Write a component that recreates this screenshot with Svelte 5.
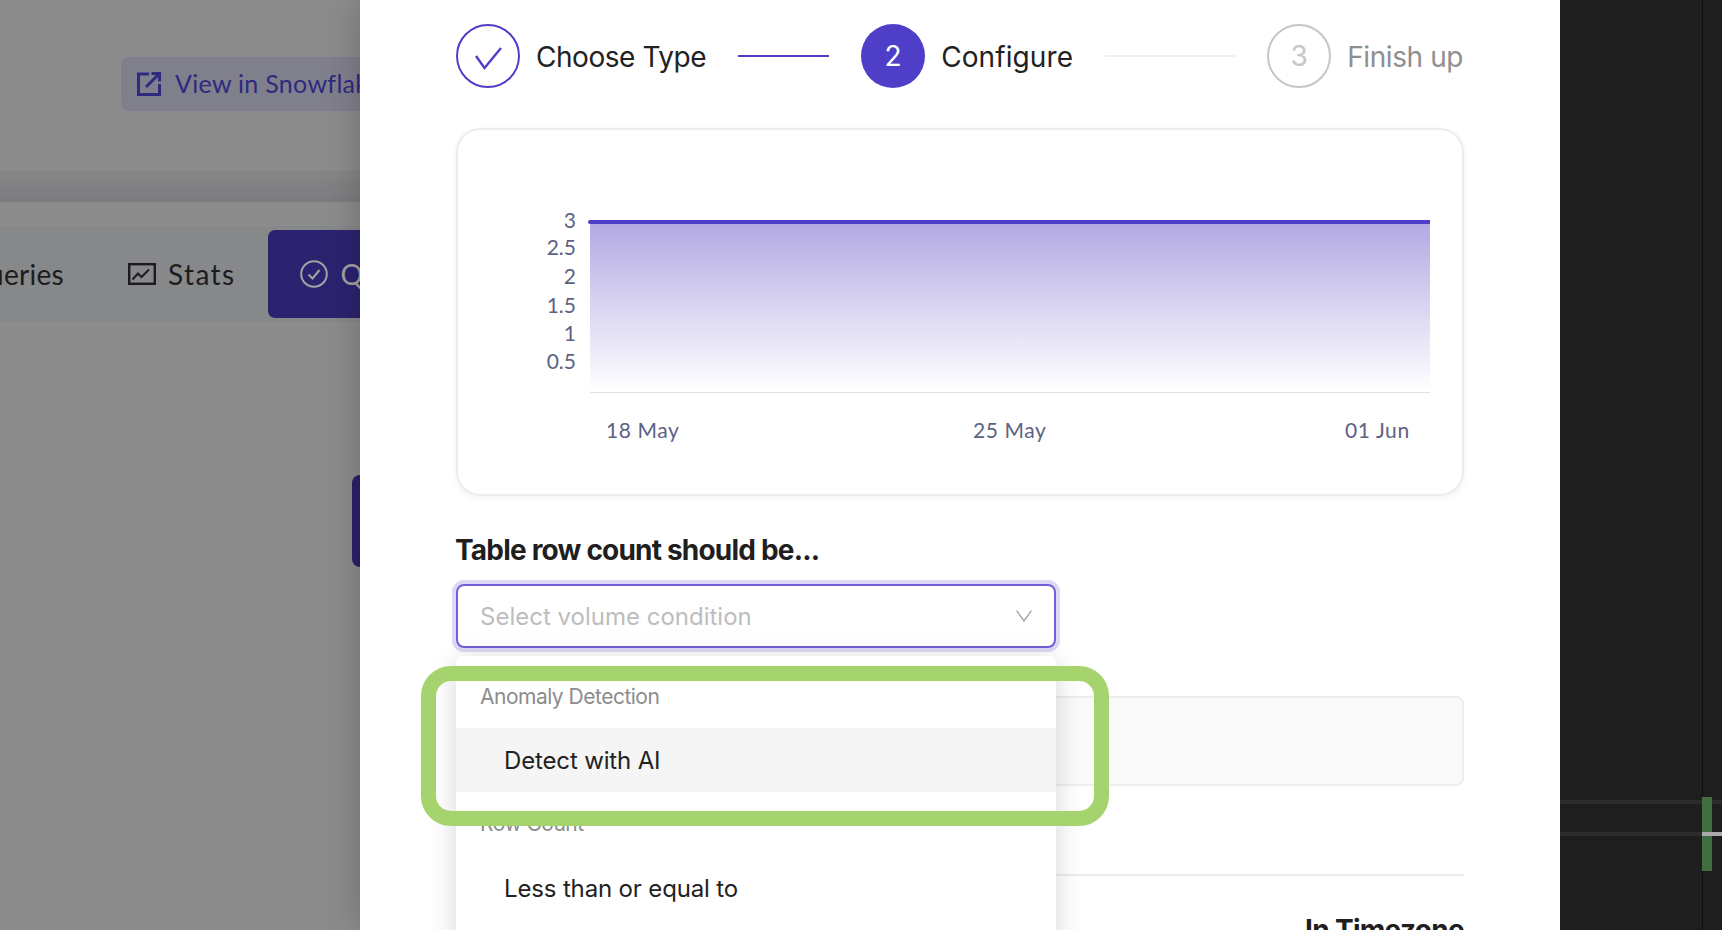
<script>
  const yTicks = [
    { label: '3', y: 220.5 },
    { label: '2.5', y: 248 },
    { label: '2', y: 276.5 },
    { label: '1.5', y: 306 },
    { label: '1', y: 334 },
    { label: '0.5', y: 362 }
  ];
  const xTicks = [
    { label: '18 May', x: 606 },
    { label: '25 May', x: 973 },
    { label: '01 Jun', x: 1345 }
  ];
</script>

<div class="screen">
  <aside class="backdrop">
    <div class="ext-btn">
      <svg class="ext-icon" viewBox="0 0 24 24" width="24" height="24" fill="none" stroke="#2e2a80" stroke-width="3">
        <path d="M12 2H1.5V22.5H22.5V12" />
        <path d="M9 15L22 2M14.5 1.5H22.5V9.5" />
      </svg>
      <span class="ext-text">View in Snowflake</span>
    </div>
    <div class="band"></div>
    <div class="tabs">
      <span class="tab-clip">Queries</span>
      <span class="tab">
        <svg viewBox="0 0 28 22" width="28" height="22" fill="none" stroke="#1c1c1e" stroke-width="2.4">
          <rect x="1.2" y="1.2" width="25.6" height="19.6" />
          <path d="M4.5 16.5L10 10.5L13.5 14L21 6.5" stroke-width="2" />
        </svg>
        Stats
      </span>
      <span class="tab active">
        <svg viewBox="0 0 28 28" width="28" height="28" fill="none" stroke="#a3a3a3" stroke-width="2">
          <circle cx="14" cy="14" r="12.8" />
          <path d="M8.5 14.5L12.5 18.5L19.5 10" />
        </svg>
        Quality
      </span>
    </div>
    <div class="stub"></div>
  </aside>

  <main class="modal">
    <div class="content">
      <nav class="stepper">
        <span class="circle done">
          <svg viewBox="0 0 60 60" width="60" height="60" fill="none" stroke="#4f3fc8" stroke-width="2.4">
            <path d="M18 30L26.5 42L43 22" />
          </svg>
        </span>
        <span class="step-label first">Choose Type</span>
        <span class="line line-a"></span>
        <span class="circle current">2</span>
        <span class="step-label mid">Configure</span>
        <span class="line line-b"></span>
        <span class="circle todo">3</span>
        <span class="step-label muted">Finish up</span>
      </nav>

      <section class="card">
        <svg class="chart" viewBox="456 128 1008 368" width="1008" height="368">
          <defs>
            <linearGradient id="area" x1="0" y1="0" x2="0" y2="1">
              <stop offset="0" stop-color="#b1a8e3" />
              <stop offset="0.5" stop-color="#d9d5f1" />
              <stop offset="1" stop-color="#ffffff" />
            </linearGradient>
          </defs>
          <rect x="590" y="222" width="840" height="170" fill="url(#area)" />
          <line x1="590" y1="392.5" x2="1430" y2="392.5" stroke="#e3e3e5" />
          <line x1="590" y1="222" x2="1430" y2="222" stroke="#4f3fc8" stroke-width="4" />
          <circle cx="590" cy="222" r="2" fill="#4f3fc8" />
          {#each yTicks as t}
            <text class="tick" x="576" y={t.y + 7} text-anchor="end">{t.label}</text>
          {/each}
          {#each xTicks as t}
            <text class="tick spaced" x={t.x} y="438">{t.label}</text>
          {/each}
        </svg>
      </section>

      <h2 class="heading">Table row count should be...</h2>

      <div class="select">
        <span>Select volume condition</span>
        <svg viewBox="0 0 16 12" width="16" height="12" fill="none" stroke="#a8a8a8" stroke-width="1.5">
          <path d="M0.6 0.6L8 11L15.4 0.6" />
        </svg>
      </div>

      <div class="field"></div>
      <div class="divider"></div>
      <div class="timezone">In Timezone</div>

      <div class="dropdown">
        <div class="group">Anomaly Detection</div>
        <div class="option hover">Detect with AI</div>
        <div class="group second">Row Count</div>
        <div class="option">Less than or equal to</div>
      </div>
    </div>
  </main>

  <div class="highlight"></div>

  <aside class="editor">
    <div class="rule"></div>
    <div class="rule second-rule"></div>
    <div class="gutter"></div>
    <div class="mark"></div>
    <div class="tickmark"></div>
  </aside>
</div>

<style>
  :global(body) {
    margin: 0;
    background: #1e1e1e;
  }

  .screen {
    position: relative;
    display: grid;
    grid-template-columns: 360px 1200px 162px;
    width: 1722px;
    height: 930px;
    overflow: hidden;
    font-family: Inter, "Liberation Sans", sans-serif;
  }

  .backdrop {
    overflow: hidden;
    background: #8c8c8c;
    font-family: Lato, "Liberation Sans", sans-serif;
  }

  .ext-btn {
    display: flex;
    align-items: center;
    gap: 14px;
    box-sizing: border-box;
    width: 300px;
    height: 54px;
    margin: 57px 0 0 121px;
    padding-left: 16px;
    border-radius: 8px;
    background: #807f8c;
    color: #2e2a80;
    font-size: 25px;
    letter-spacing: 0.3px;
    white-space: nowrap;
  }

  .ext-icon {
    flex: none;
  }

  .ext-text {
    padding-bottom: 2px;
  }

  .band {
    height: 32px;
    margin-top: 59px;
    background: linear-gradient(#878787, #7b7c80);
  }

  .tabs {
    display: flex;
    align-items: center;
    height: 96px;
    margin-top: 24px;
    background: #87888a;
    color: #1c1c1e;
    font-size: 28px;
    letter-spacing: 1.4px;
    white-space: nowrap;
  }

  .tab-clip {
    flex: none;
    width: 64px;
    direction: rtl;
    overflow: hidden;
    letter-spacing: 0.3px;
  }

  .tab {
    display: flex;
    flex: none;
    align-items: center;
    gap: 12px;
    margin-left: 64px;
  }

  .tab.active {
    gap: 13px;
    box-sizing: border-box;
    width: 200px;
    height: 88px;
    margin-left: 32px;
    padding-left: 32px;
    border-radius: 7px;
    background: #2c2370;
    color: #a3a3a3;
  }

  .stub {
    width: 40px;
    height: 92px;
    margin: 153px 0 0 352px;
    border-radius: 8px;
    background: #2a2268;
  }

  .modal {
    position: relative;
    z-index: 1;
    overflow: hidden;
    background: #fff;
    box-shadow: 0 0 36px rgba(0, 0, 0, 0.22);
  }

  .content {
    position: relative;
    width: 1008px;
    margin-left: 96px;
    padding-top: 24px;
  }

  .stepper {
    display: flex;
    align-items: center;
    height: 64px;
    color: #222;
    font-size: 28px;
  }

  .circle {
    display: flex;
    flex: none;
    align-items: center;
    justify-content: center;
    box-sizing: border-box;
    width: 64px;
    height: 64px;
    border-radius: 50%;
  }

  .done {
    border: 2px solid #4f3fc8;
  }

  .current {
    background: #4f3fc8;
    color: #fff;
  }

  .todo {
    border: 2px solid #c6c6c6;
    color: #c6c6c6;
  }

  .step-label {
    margin-left: 16px;
    padding-top: 2px;
    white-space: nowrap;
  }

  .first {
    letter-spacing: -0.45px;
  }

  .mid {
    letter-spacing: 0.1px;
  }

  .muted {
    color: #8f8f8f;
    letter-spacing: -0.4px;
  }

  .line {
    flex: none;
    height: 2px;
    margin: 0 32px;
  }

  .line-a {
    width: 91px;
    background: #4f3fc8;
  }

  .line-b {
    width: 130px;
    background: #efefef;
  }

  .card {
    box-sizing: border-box;
    width: 1008px;
    height: 368px;
    margin-top: 40px;
    overflow: hidden;
    border: 2px solid #ececf1;
    border-radius: 24px;
    box-shadow: 0 2px 6px rgba(30, 30, 60, 0.06);
  }

  .chart {
    display: block;
    margin: -2px;
  }

  .tick {
    fill: #5d6283;
    font-family: Lato, "Liberation Sans", sans-serif;
    font-size: 21px;
  }

  .spaced {
    letter-spacing: 0.6px;
  }

  .heading {
    margin: 35px 0 0 -1px;
    color: #1f1f1f;
    font-size: 28px;
    font-weight: 700;
    line-height: 38px;
    letter-spacing: -0.8px;
  }

  .select {
    display: flex;
    align-items: center;
    justify-content: space-between;
    box-sizing: border-box;
    width: 600px;
    height: 64px;
    margin-top: 15px;
    padding: 0 22px;
    border: 2px solid #6f5fd8;
    border-radius: 8px;
    box-shadow: 0 0 0 4px #dcd9f5;
    color: #bdbdbd;
    font-size: 24px;
  }

  .field {
    box-sizing: border-box;
    height: 90px;
    margin-top: 48px;
    border: 2px solid #eeeeee;
    border-radius: 8px;
    background: #fafafa;
  }

  .divider {
    height: 2px;
    margin-top: 88px;
    background: #ededed;
  }

  .timezone {
    margin-top: 36px;
    color: #1f1f1f;
    font-size: 28px;
    font-weight: 700;
    line-height: 36px;
    text-align: right;
    letter-spacing: -0.7px;
  }

  .dropdown {
    position: absolute;
    top: 656px;
    left: 0;
    box-sizing: border-box;
    width: 600px;
    height: 300px;
    padding-top: 24px;
    border-radius: 8px;
    background: #fff;
    box-shadow: 0 4px 28px rgba(0, 0, 0, 0.16);
  }

  .group {
    height: 32px;
    padding-left: 24px;
    color: #8c8c8c;
    font-size: 21px;
    line-height: 34px;
    letter-spacing: -0.5px;
  }

  .second {
    height: 33px;
    margin-top: 15px;
  }

  .option {
    height: 64px;
    margin-top: 16px;
    padding-left: 48px;
    color: #222;
    font-size: 24px;
    line-height: 66px;
    letter-spacing: -0.15px;
  }

  .hover {
    background: #f5f5f5;
  }

  .highlight {
    position: absolute;
    top: 666px;
    left: 421px;
    z-index: 2;
    box-sizing: border-box;
    width: 688px;
    height: 160px;
    border: 15px solid #a5d46f;
    border-radius: 30px;
  }

  .editor {
    position: relative;
    z-index: 1;
    overflow: hidden;
    padding-top: 800px;
    background: #1e1e1e;
  }

  .rule {
    height: 4px;
    background: #2c2c2c;
  }

  .second-rule {
    margin-top: 28px;
  }

  .gutter {
    position: absolute;
    top: 0;
    bottom: 0;
    left: 142px;
    width: 1px;
    background: #101010;
  }

  .mark {
    position: absolute;
    top: 797px;
    left: 142px;
    width: 10px;
    height: 74px;
    background: #3f6f40;
  }

  .tickmark {
    position: absolute;
    top: 832px;
    left: 142px;
    width: 20px;
    height: 4px;
    background: #a9a9a9;
  }
</style>
